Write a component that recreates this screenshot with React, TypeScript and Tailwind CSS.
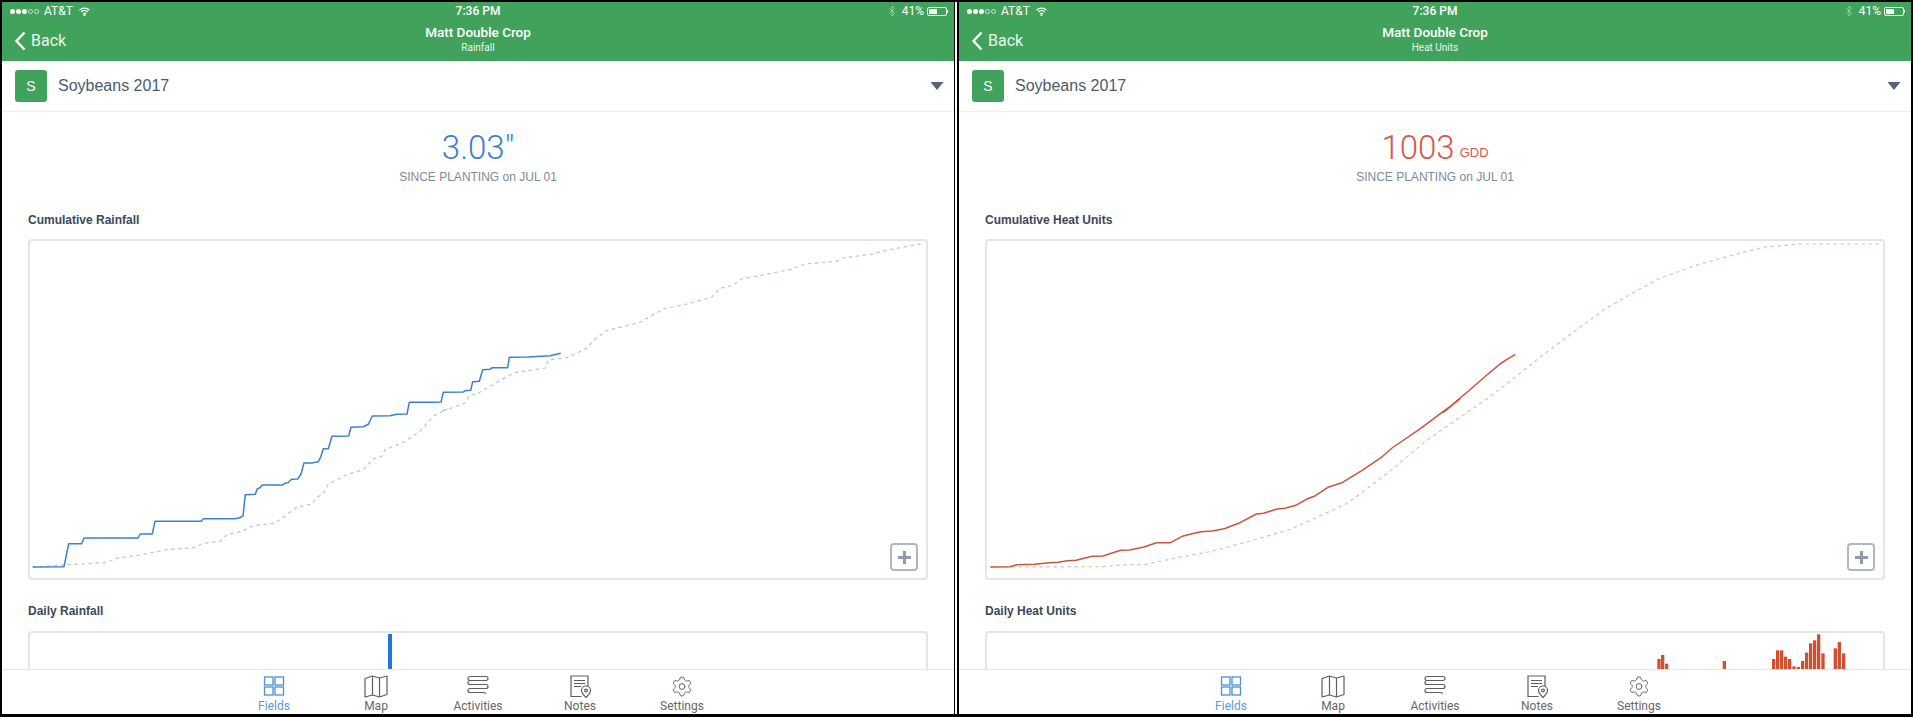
import { Bluetooth, Settings } from "lucide-react";

type Pt = number[];

// points read off the crops: each group is [offsetX, offsetY, scaleX, scaleY, points]
const scale = (ox: number, oy: number, sx: number, sy: number, pts: Pt[]) =>
  pts.map(([x, y]) => [ox + x / sx, oy + y / sy]);

const toPath = (pts: Pt[]) =>
  pts.map(([x, y], i) => `${i ? "L" : "M"}${x.toFixed(1)} ${y.toFixed(1)}`).join(" ");

const rainActual = [
  ...scale(0, 340, 3, 3, [
    [98, 684], [192, 683], [206, 614], [245, 614], [252, 597], [414, 597], [421, 585], [457, 585],
    [465, 547], [603, 547], [611, 539], [703, 539], [717, 537], [729, 531], [736, 467], [766, 466],
    [772, 449], [780, 446], [787, 438], [848, 438], [855, 432], [864, 431], [875, 421], [893, 420],
    [903, 405], [912, 372], [935, 372], [955, 368], [963, 352], [970, 329], [985, 329], [996, 292],
    [1046, 291], [1053, 265], [1090, 263], [1105, 256], [1117, 231], [1170, 230], [1190, 226],
    [1221, 225], [1228, 190], [1295, 190], [1323, 189],
  ]),
  ...scale(440, 230, 3, 3, [
    [10, 490], [70, 489], [75, 485], [92, 484], [98, 458], [118, 457], [128, 422], [150, 421],
    [157, 416], [203, 416], [208, 385], [265, 384], [330, 380], [362, 373],
  ]),
];

const rainAverage = [
  ...scale(0, 340, 3, 3, [
    [98, 684], [160, 680], [200, 677], [250, 675], [320, 670], [350, 658], [420, 648], [500, 632],
    [580, 626], [610, 613], [660, 607], [680, 587], [725, 577], [760, 560], [825, 553], [860, 527],
    [890, 505], [935, 495], [950, 475], [970, 465], [985, 435], [1040, 407], [1090, 392], [1120, 360],
    [1145, 352], [1155, 332], [1210, 310], [1260, 277], [1300, 232], [1340, 210],
  ]),
  ...scale(440, 230, 3, 3, [
    [5, 547], [40, 535], [75, 522], [90, 497], [110, 495], [150, 472], [205, 440], [225, 431],
    [315, 417], [325, 393], [385, 385], [440, 358], [465, 330], [500, 305], [600, 280], [670, 240],
    [740, 225], [815, 205], [840, 178], [875, 170], [905, 150], [1050, 122], [1095, 105], [1190, 97],
    [1205, 87], [1300, 75], [1320, 68], [1450, 43],
  ]),
];

const heatActual = [
  ...scale(960, 400, 2.8, 3, [
    [85, 504], [140, 503], [160, 497], [210, 496], [250, 491], [275, 490], [300, 485], [325, 484],
    [370, 472], [400, 471], [450, 454], [475, 453], [515, 444], [550, 431], [590, 431], [622, 412],
    [650, 404], [675, 398], [705, 396], [740, 389], [780, 373], [830, 345], [850, 343], [885, 331],
    [910, 328], [940, 319], [970, 301], [995, 290], [1030, 265], [1070, 251], [1125, 215], [1180, 175],
    [1210, 147], [1290, 88], [1350, 40], [1400, 0],
  ]),
  ...scale(1400, 230, 3, 3, [
    [130, 550], [165, 520], [210, 482], [270, 430], [300, 405], [320, 392], [346, 376],
  ]),
];

const heatAverage = [
  ...scale(960, 400, 2.8, 3, [
    [85, 504], [150, 504], [400, 503], [450, 498], [520, 496], [600, 478], [700, 458], [800, 430],
    [925, 391], [1000, 355], [1080, 315], [1120, 285], [1200, 220], [1300, 130], [1400, 55], [1475, 0],
  ]),
  ...scale(1400, 230, 3, 3, [
    [300, 480], [350, 440], [420, 385], [520, 310], [620, 237], [720, 180], [780, 148], [900, 105],
    [1000, 78], [1090, 55], [1200, 45], [1440, 45],
  ]),
];

// x start and top of each daily heat bar, in the crop at 1600,620
const heatBars = [
  [172, 120], [183, 108], [195, 134], [368, 126], [516, 120], [528, 94], [540, 94], [552, 113],
  [564, 120], [577, 142], [590, 144], [603, 126], [615, 101], [627, 73], [639, 64], [651, 46],
  [664, 103], [701, 88], [713, 69], [726, 103],
];

function StatusBar() {
  return (
    <div className="grid h-[18px] grid-cols-3 items-center px-[6px] text-[12px] text-white font-['Roboto',sans-serif]">
      <div className="flex items-center">
        <div className="ml-[2px] flex gap-[1px]">
          {[0, 1, 2].map((i) => (
            <span key={i} className="h-[5px] w-[5px] rounded-full bg-white" />
          ))}
          {[0, 1].map((i) => (
            <span key={i} className="h-[5px] w-[5px] rounded-full border border-white/70" />
          ))}
        </div>
        <span className="ml-[5px]">AT&amp;T</span>
        <svg className="ml-[6px]" width="11" height="9" viewBox="0 0 22 18" fill="none" stroke="#fff" strokeWidth="2.4">
          <path d="M1 6.5a14 14 0 0 1 20 0" />
          <path d="M4.5 10a9.5 9.5 0 0 1 13 0" />
          <path d="M8 13.5a4.5 4.5 0 0 1 6 0" />
          <circle cx="11" cy="16" r="1" fill="#fff" />
        </svg>
      </div>
      <div className="text-center font-medium">7:36 PM</div>
      <div className="flex items-center justify-end pr-[-1px]">
        <Bluetooth size={12} strokeWidth={1.6} className="text-white/50" />
        <span className="ml-[4px]">41%</span>
        <div className="ml-[3px] h-[9px] w-[20px] rounded-[2px] border border-white p-[1px]">
          <div className="h-full w-[8px] bg-white" />
        </div>
        <div className="h-[3px] w-[1px] bg-white" />
      </div>
    </div>
  );
}

function NavBar({ subtitle }: { subtitle: string }) {
  return (
    <div className="grid h-[41px] grid-cols-3 text-white font-['Roboto',sans-serif]">
      <div className="flex items-center pl-[12px]">
        <svg width="12" height="20" viewBox="0 0 12 20" fill="none" stroke="#fff" strokeWidth="2.4">
          <path d="M10.5 1.5 2.5 10l8 8.5" />
        </svg>
        <span className="ml-[5px] text-[16px] opacity-90">Back</span>
      </div>
      <div className="flex flex-col items-center pt-[4px]">
        <span className="text-[13.5px] font-medium leading-4">Matt Double Crop</span>
        <span className="mt-[2px] text-[10px] leading-3 opacity-90">{subtitle}</span>
      </div>
      <div />
    </div>
  );
}

function CropSelect() {
  return (
    <div className="flex h-[51px] items-center justify-between border-b border-[#eceef1] pl-[13px] pr-[10px]">
      <div className="flex items-center">
        <div className="flex h-[32px] w-[32px] items-center justify-center rounded-[3px] bg-[#41a35b] text-[14px] text-white">
          S
        </div>
        <span className="ml-[11px] text-[16px] text-[#4e5a6e]">Soybeans 2017</span>
      </div>
      <svg width="14" height="8" viewBox="0 0 14 8" fill="#56637a">
        <path d="M0.5 0H13.5L7 8Z" />
      </svg>
    </div>
  );
}

function Chart({ originX, actual, average, color, dash }: { originX: number; actual: Pt[]; average: Pt[]; color: string; dash: string }) {
  return (
    <div className="relative h-[341px] rounded-[4px] border-2 border-[#e2e5e9]">
      <svg className="block h-full w-full" viewBox={`${originX + 2} 242 896 337`} fill="none">
        <path d={toPath(average)} stroke={dash} strokeWidth="1.2" strokeDasharray="3.5 3.5" />
        <path d={toPath(actual)} stroke={color} strokeWidth="1.5" strokeLinejoin="round" />
      </svg>
      <div className="absolute bottom-[7px] right-[8px] flex h-[28px] w-[28px] items-center justify-center rounded-[4px] border-2 border-[#aeb8c5] bg-white">
        <svg width="13" height="13" viewBox="0 0 13 13" fill="#8f9bad">
          <path d="M5 0h3v5h5v3H8v5H5V8H0V5h5Z" />
        </svg>
      </div>
    </div>
  );
}

const iconStroke = "#5f5f5f";

function TabBar() {
  return (
    <div className="flex h-[45px] shrink-0 justify-center border-t border-[#e5e7ea] bg-white pt-[5px] text-[12px] leading-[14px] text-[#666] font-['Roboto',sans-serif]">
      <div className="flex w-[102px] flex-col items-center text-[#5a9bdc]">
        <svg className="h-[23px]" width="22" height="23" viewBox="0 0 22 23" fill="none" stroke="#4d90d6" strokeWidth="1.3">
          <rect x="1.5" y="2" width="8.5" height="8" />
          <rect x="12" y="2" width="8.5" height="8" />
          <rect x="1.5" y="12" width="8.5" height="8" />
          <rect x="12" y="12" width="8.5" height="8" />
        </svg>
        <span className="mt-[1px]">Fields</span>
      </div>
      <div className="flex w-[102px] flex-col items-center">
        <svg width="24" height="23" viewBox="0 0 24 23" fill="none" stroke={iconStroke} strokeWidth="1.2" strokeLinejoin="round">
          <path d="M1 3.5 8.5 1l7 2L23 1v18.5L15.5 22l-7-2L1 22Z" />
          <path d="M8.5 1v19M15.5 3v19" />
        </svg>
        <span className="mt-[1px]">Map</span>
      </div>
      <div className="flex w-[102px] flex-col items-center">
        <svg width="24" height="23" viewBox="0 0 24 23" fill="none" stroke={iconStroke} strokeWidth="1.2">
          <path d="M4 1.5h16a2 2 0 0 1 0 4H4a2 2 0 0 0 0 4h16a2 2 0 0 1 0 4H4a2 2 0 0 0 0 4h14a1.5 1.5 0 0 1 1.5 1.5" />
          <path d="M4 1.5a2 2 0 0 0 0 4" />
        </svg>
        <span className="mt-[1px]">Activities</span>
      </div>
      <div className="flex w-[102px] flex-col items-center">
        <svg width="24" height="23" viewBox="0 0 24 23" fill="none" stroke={iconStroke} strokeWidth="1.2">
          <path d="M20 11V1H3v20.5h10.5" />
          <path d="M6 5.5h11M6 8.5h11M6 11.5h7" />
          <path d="M18 22.5c-2.5-2.5-4.5-4.5-4.5-7a4.5 4.5 0 0 1 9 0c0 2.500-2 4.500-4.500 7Z" fill="#fff" />
          <circle cx="18" cy="15.500" r="1.400" />
        </svg>
        <span className="mt-[1px]">Notes</span>
      </div>
      <div className="flex w-[102px] flex-col items-center">
        <Settings size={24} strokeWidth={1} className="h-[23px] text-[#5f5f5f]" />
        <span className="mt-[1px]">Settings</span>
      </div>
    </div>
  );
}

function Panel(props: {
  subtitle: string;
  originX: number;
  stat: string;
  unit?: string;
  statColor: string;
  chartTitle: string;
  dailyTitle: string;
  actual: Pt[];
  average: Pt[];
  lineColor: string;
  dashColor: string;
  daily: React.ReactNode;
}) {
  return (
    <div className="flex h-full w-[952px] shrink-0 flex-col bg-white font-['Liberation_Sans',sans-serif]">
      <div className="h-[59px] shrink-0 bg-[#41a35b]">
        <StatusBar />
        <NavBar subtitle={props.subtitle} />
      </div>
      <CropSelect />
      <div className="min-h-0 flex-1 overflow-hidden">
        <div className="flex h-[40px] items-center justify-center mt-4 font-['Roboto',sans-serif]">
          <span className={`text-[33px] font-light ${props.statColor}`}>{props.stat}</span>
          {props.unit && (
            <span className={`ml-[5px] mt-[10px] text-[13px] font-['Liberation_Sans',sans-serif] ${props.statColor}`}>
              {props.unit}
            </span>
          )}
        </div>
        <div className="mt-[1px] text-center text-[12px] leading-4 text-[#7c8a9c]">SINCE PLANTING on JUL 01</div>
        <div className="mx-[26px] mt-[27px]">
          <div className="text-[12px] font-bold leading-4 text-[#3c4858]">{props.chartTitle}</div>
          <div className="mt-[11px]">
            <Chart originX={props.originX} actual={props.actual} average={props.average} color={props.lineColor} dash={props.dashColor} />
          </div>
          <div className="mt-[23px] text-[12px] font-bold leading-4 text-[#3c4858]">{props.dailyTitle}</div>
          <div className="mt-3 h-[200px] rounded-[4px] border-2 border-[#e2e5e9]">{props.daily}</div>
        </div>
      </div>
      <TabBar />
    </div>
  );
}

export default function App() {
  return (
    <div className="flex h-[717px] w-[1913px] overflow-hidden bg-black pb-[3px] pl-[2px] pt-[2px]">
      <Panel
        subtitle="Rainfall"
        originX={28}
        stat={'3.03"'}
        statColor="text-[#3a80d2]"
        chartTitle="Cumulative Rainfall"
        dailyTitle="Daily Rainfall"
        actual={rainActual}
        average={rainAverage}
        lineColor="#3a80d2"
        dashColor="#b5c6da"
        daily={
          <svg className="block h-full w-full" viewBox="30 634 896 196">
            <rect x="388" y="635" width="4" height="40" fill="#1f77d8" />
          </svg>
        }
      />
      <div className="ml-[1px] mr-[2px] w-[2px] shrink-0 bg-white" />
      <Panel
        subtitle="Heat Units"
        originX={985}
        stat="1003"
        unit="GDD"
        statColor="text-[#d9574a]"
        chartTitle="Cumulative Heat Units"
        dailyTitle="Daily Heat Units"
        actual={heatActual}
        average={heatAverage}
        lineColor="#c8563c"
        dashColor="#e3bdb5"
        daily={
          <svg className="block h-full w-full" viewBox="987 634 896 196">
            {heatBars.map(([x, top]) => (
              <rect key={x} x={1600 + x / 3} y={620 + top / 3} width="3.300" height="60" fill="#cf4f2f" />
            ))}
          </svg>
        }
      />
    </div>
  );
}
